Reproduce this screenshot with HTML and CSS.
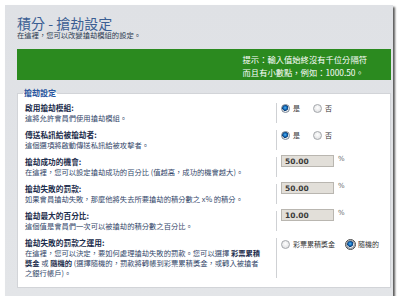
FILE: index.html
```html
<!DOCTYPE html>
<html>
<head>
<meta charset="utf-8">
<link rel="stylesheet" href="styles.css">
</head>
<body>
<div class="panel">
  <h1 class="title">積分 - 搶劫設定</h1>
  <p class="sub">在這裡，您可以改變搶劫模組的設定。</p>
  <div class="tip">
    <div class="tip-text">提示：輸入值始終沒有千位分隔符<br>而且有小數點，例如：1000.50。</div>
  </div>
  <fieldset class="box">
    <legend class="legend">搶劫設定</legend>
    <div class="row">
      <div class="lbl"><b class="name">啟用搶劫模組:</b><span class="desc">這將允許會員們使用搶劫模組。</span></div>
      <div class="ctl">
        <span class="opt"><i class="radio on"></i>是</span>
        <span class="opt"><i class="radio"></i>否</span>
      </div>
    </div>
    <div class="row">
      <div class="lbl"><b class="name">傳送私訊給被搶劫者:</b><span class="desc">這個選項將啟動傳送私訊給被攻擊者。</span></div>
      <div class="ctl">
        <span class="opt"><i class="radio on"></i>是</span>
        <span class="opt"><i class="radio"></i>否</span>
      </div>
    </div>
    <div class="row">
      <div class="lbl"><b class="name">搶劫成功的機會:</b><span class="desc nowrap">在這裡，您可以設定搶劫成功的百分比 (值越高，成功的機會越大)。</span></div>
      <div class="ctl"><input class="num" type="text" value="50.00"><span class="pct">%</span></div>
    </div>
    <div class="row">
      <div class="lbl"><b class="name">搶劫失敗的罰款:</b><span class="desc nowrap">如果會員搶劫失敗，那麼他將失去所要搶劫的積分數之 x% 的積分。</span></div>
      <div class="ctl"><input class="num" type="text" value="50.00"><span class="pct">%</span></div>
    </div>
    <div class="row">
      <div class="lbl"><b class="name">搶劫最大的百分比:</b><span class="desc">這個值是會員們一次可以被搶劫的積分數之百分比。</span></div>
      <div class="ctl"><input class="num" type="text" value="10.00"><span class="pct">%</span></div>
    </div>
    <div class="row">
      <div class="lbl"><b class="name">搶劫失敗的罰款之運用:</b><span class="desc">在這裡，您可以決定，要如何處理搶劫失敗的罰款。您可以選擇 <b>彩票累積</b><br><b>獎金</b> 或 <b>隨機的</b> (選擇隨機的，罰款將轉帳到彩票累積獎金，或轉入被搶者<br>之銀行帳戶)。</span></div>
      <div class="ctl ctl-wide">
        <span class="opt opt-wide"><i class="radio"></i>彩票累積獎金</span>
        <span class="opt"><i class="radio on focus"></i>隨機的</span>
      </div>
    </div>
  </fieldset>
</div>
</body>
</html>
```
FILE: styles.css
```css
html, body {
  margin: 0;
  padding: 0;
  background: #ffffff;
}
body {
  font-family: "Noto Sans CJK TC", "Liberation Sans", sans-serif;
}
.panel {
  width: 374px;
  margin: 5px 0 0 5px;
  padding: 10px 2px 8px 12px;
  background: linear-gradient(#dfe1e5, #e3e5e8);
  box-shadow: 2px 2px 2px rgba(0, 0, 0, 0.65);
}
.title {
  margin: 0;
  font-size: 14px;
  line-height: 16px;
  font-weight: normal;
  color: #3b5e93;
}
.sub {
  margin: 0;
  font-size: 7.3px;
  line-height: 9px;
  color: #2d3b52;
}
.tip {
  margin-top: 9px;
  height: 26px;
  padding: 4px 24px 1px 0;
  background: #2b8a1f;
  display: flex;
  justify-content: flex-end;
}
.tip-text {
  color: #ffffff;
  font-size: 8.3px;
  line-height: 13px;
}
.box {
  margin: 8px 0 0 0;
  padding: 5px 0 9px 7px;
  border: 1px solid #d2d4d8;
  background: #ffffff;
  min-width: 0;
}
.legend {
  padding: 0 1px;
  margin-left: -2px;
  font-size: 8px;
  line-height: 10px;
  font-weight: bold;
  color: #2a57a0;
}
.row {
  display: flex;
  margin-bottom: 7px;
}
.row:last-child {
  margin-bottom: 0;
}
.lbl {
  width: 251px;
  flex: none;
  display: flex;
  flex-direction: column;
}
.name {
  font-size: 7.7px;
  line-height: 10px;
  color: #1c2d4c;
}
.desc {
  font-size: 7.3px;
  line-height: 10px;
  color: #33476a;
}
.desc b {
  color: #1c2d4c;
}
.nowrap {
  white-space: nowrap;
}
.ctl {
  border-left: 1px solid #cfd1d4;
  padding-left: 4px;
  display: flex;
  align-items: flex-start;
  gap: 13px;
}
.ctl-wide {
  gap: 11px;
  padding-top: 1px;
}
.opt {
  display: flex;
  align-items: center;
  gap: 3px;
  font-size: 7px;
  line-height: 10px;
  color: #333333;
}
.radio {
  display: block;
  width: 7px;
  height: 7px;
  border: 1px solid #a4a7ab;
  border-radius: 50%;
  background: radial-gradient(circle at 50% 40%, #ffffff, #d9dadc);
}
.radio.on {
  border-color: #7c8794;
  background: radial-gradient(circle at 45% 40%, #5ab6f0 0, #1570c0 1.6px, #0b3f7a 2.8px, #c8ccd2 3.2px, #eef0f2 3.6px);
}
.radio.focus {
  outline: 1px solid #4a4a4a;
  outline-offset: 0;
}
.num {
  box-sizing: border-box;
  width: 53px;
  height: 12px;
  margin: -2px 0 0 0;
  padding: 0 0 0 3px;
  border: 1px solid #b9b6b0;
  background: #e2dfd9;
  font-family: "DejaVu Sans", sans-serif;
  font-size: 7.5px;
  font-weight: bold;
  color: #3a3a3a;
  line-height: 10px;
}
.pct {
  margin-left: -9px;
  margin-top: -3px;
  font-family: "DejaVu Sans", sans-serif;
  font-size: 7px;
  line-height: 10px;
  color: #6a6a6a;
}
```
